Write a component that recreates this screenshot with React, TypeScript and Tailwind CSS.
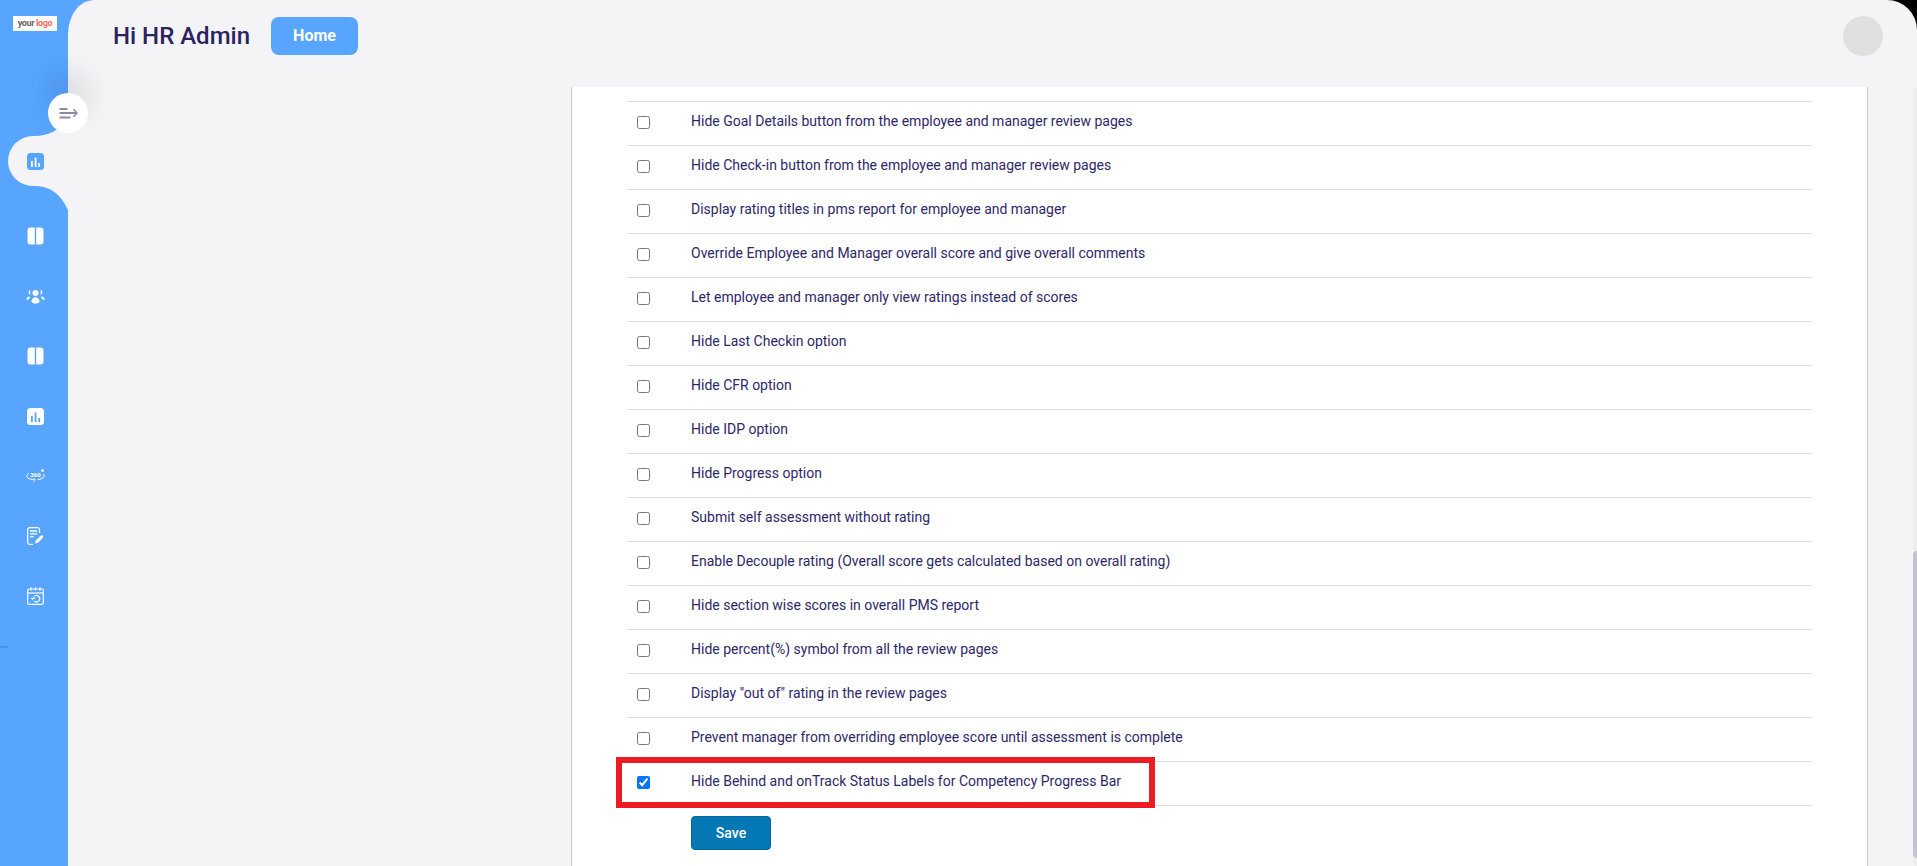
import React from 'react';

const rows = [
  'Hide Goal Details button from the employee and manager review pages',
  'Hide Check-in button from the employee and manager review pages',
  'Display rating titles in pms report for employee and manager',
  'Override Employee and Manager overall score and give overall comments',
  'Let employee and manager only view ratings instead of scores',
  'Hide Last Checkin option',
  'Hide CFR option',
  'Hide IDP option',
  'Hide Progress option',
  'Submit self assessment without rating',
  'Enable Decouple rating (Overall score gets calculated based on overall rating)',
  'Hide section wise scores in overall PMS report',
  'Hide percent(%) symbol from all the review pages',
  'Display "out of" rating in the review pages',
  'Prevent manager from overriding employee score until assessment is complete',
  'Hide Behind and onTrack Status Labels for Competency Progress Bar',
];

const ChartIcon: React.FC<{ bg: string; fg: string }> = ({ bg, fg }) => (
  <svg width="17" height="17" viewBox="0 0 17 17">
    <rect width="17" height="17" rx="3.5" fill={bg} />
    <rect x="4" y="8" width="1.8" height="6" fill={fg} />
    <rect x="7.7" y="4.5" width="1.8" height="9.5" fill={fg} />
    <rect x="11.3" y="10" width="1.8" height="4" fill={fg} />
  </svg>
);

const SplitIcon = () => (
  <svg width="17" height="18" viewBox="0 0 17 18">
    <path d="M3.5 0.5H7.8V17.5H3.5A3 3 0 0 1 0.5 14.5V3.5A3 3 0 0 1 3.5 0.5Z" fill="#fff" />
    <path d="M9.2 0.5H13.5A3 3 0 0 1 16.5 3.5V14.5A3 3 0 0 1 13.5 17.5H9.2Z" fill="#fff" />
  </svg>
);

const PeopleIcon = () => (
  <svg width="19" height="15" viewBox="0 0 19 15" fill="#fff">
    <circle cx="9.5" cy="4" r="3" />
    <path d="M5.5 12.5C5.5 10 7.2 8.3 9.5 8.3S13.5 10 13.5 12.5C13.5 14 11.5 14.5 9.5 14.5S5.5 14 5.5 12.5Z" />
    <path d="M4.6 0.9C3.2 1.2 2.3 2.3 2.6 3.7C2.8 4.7 3.5 5.4 4.6 5.6C4.1 4.2 4 2.4 4.6 0.9Z" />
    <path d="M14.4 0.9C15.8 1.2 16.7 2.3 16.4 3.7C16.2 4.7 15.5 5.4 14.4 5.6C14.9 4.2 15 2.4 14.4 0.9Z" />
    <path d="M0.2 10.2C0.6 8.6 1.8 7.8 3.6 7.6L4.2 8.4C3.4 9 3 9.6 2.8 10.6C1.8 10.8 0.8 10.7 0.2 10.2Z" />
    <path d="M18.8 10.2C18.4 8.6 17.2 7.8 15.4 7.6L14.8 8.4C15.6 9 16 9.6 16.2 10.6C17.2 10.8 18.2 10.7 18.8 10.2Z" />
  </svg>
);

const Icon360 = () => (
  <svg width="19" height="14" viewBox="0 0 19 14" fill="none" stroke="#fff">
    <circle cx="16.5" cy="1.6" r="1.4" fill="#fff" stroke="none" />
    <path d="M3 4.5C1.6 5.2 0.7 6 0.7 7C0.7 9 4.5 10.5 8 10.7" strokeWidth="1" />
    <path d="M11.5 10.6C15 10.2 18.2 9 18.2 7C18.2 6.3 17.7 5.7 17 5.2" strokeWidth="1" />
    <path d="M7.5 9.2L9.2 10.8L7.5 12.6" strokeWidth="1" />
    <text x="9.5" y="7.6" textAnchor="middle" fontSize="6" fontWeight="700" fill="#fff" stroke="none" fontFamily="Roboto, sans-serif">
      360
    </text>
  </svg>
);

const DocIcon = () => (
  <svg width="17" height="18" viewBox="0 0 17 18" fill="none" stroke="#fff">
    <path d="M12.5 6V2.5A1.8 1.8 0 0 0 10.7 0.7H2.5A1.8 1.8 0 0 0 0.7 2.5V15.5A1.8 1.8 0 0 0 2.5 17.3H6" strokeWidth="1.2" />
    <path d="M3 4H10M3 6.8H10M3 9.6H7" strokeWidth="1.3" />
    <path d="M8 16.5L8.7 13.5L13.5 8.7C14.2 8 15.2 8 15.8 8.6C16.4 9.2 16.4 10.2 15.7 10.9L10.9 15.8Z" fill="#fff" stroke="none" />
  </svg>
);

const CalendarIcon = () => (
  <svg width="17" height="18" viewBox="0 0 17 18" fill="none" stroke="#fff">
    <rect x="0.7" y="2" width="15.6" height="15.3" rx="1.5" strokeWidth="1.2" />
    <path d="M0.7 6H16.3" strokeWidth="1.2" />
    <path d="M4 0.3V3.5M8.5 0.3V3.5M13 0.3V3.5" strokeWidth="1.3" />
    <path d="M7.5 9.2A3.2 3.2 0 1 1 7.5 14.2" strokeWidth="1.2" />
    <path d="M4 11.5H7.8L6.2 9.8M6.2 13.2L4.6 11.5" strokeWidth="1" />
  </svg>
);

const Slot: React.FC<{ children: React.ReactNode }> = ({ children }) => (
  <div className="h-[60px] flex items-center justify-center">{children}</div>
);

export default function App() {
  return (
    <div
      className="relative flex h-[866px] w-[1917px] overflow-hidden bg-linear-to-r from-[#57a5ff] from-50% to-black to-50%"
      style={{ fontFamily: 'Roboto, sans-serif' }}
    >
      <aside className="relative w-[68px] shrink-0 bg-[#57a5ff]">
        <div className="ml-[13px] mt-[16px] flex h-[15px] w-[44px] items-center justify-center bg-white text-[9px] font-bold leading-none tracking-[-0.4px]">
          <span className="text-[#666666]">your</span>
          <span className="ml-[2px] text-[#ef6a5f]">logo</span>
        </div>

        <svg className="absolute left-0 top-[110px]" width="68" height="100" viewBox="0 0 68 100">
          <path
            d="M68 6C62 18 52 26 33 26A25 25 0 0 0 33 76C50 76 60 83 68 100Z"
            fill="#f4f4f7"
          />
        </svg>

        <div className="relative w-[70px] pt-[100px]">
          <Slot>
            <ChartIcon bg="#57a5ff" fg="#fff" />
          </Slot>
          <div className="h-[15px]" />
          <Slot>
            <SplitIcon />
          </Slot>
          <Slot>
            <PeopleIcon />
          </Slot>
          <Slot>
            <SplitIcon />
          </Slot>
          <Slot>
            <ChartIcon bg="#fff" fg="#57a5ff" />
          </Slot>
          <Slot>
            <Icon360 />
          </Slot>
          <Slot>
            <DocIcon />
          </Slot>
          <Slot>
            <CalendarIcon />
          </Slot>
        </div>
        <div className="absolute left-0 top-[646px] h-[2px] w-[8px] bg-[#3f93f5]" />
      </aside>

      <main className="flex min-w-0 flex-1 flex-col rounded-tl-[26px_34px] rounded-tr-[30px] bg-[#f4f4f7]">
        <header className="flex h-[87px] shrink-0 items-start pl-[45px] pr-[34px]">
          <h1 className="mt-[19px] text-2xl font-medium leading-[34px] text-[#2b2360]">Hi HR Admin</h1>
          <button className="ml-[21px] mt-[17px] h-[38px] w-[87px] rounded-lg bg-[#57a5ff] text-base font-bold text-white">
            Home
          </button>
          <div className="ml-auto mt-[16px] h-10 w-10 rounded-full bg-[#e0e0e0]" />
        </header>

        <div className="min-h-0 flex-1 pl-[503px] pr-[49px]">
          <section className="h-full border-x border-[#c8c8c8] bg-white pl-[55px] pr-[55px] pt-[14px]">
            <div className="border-t border-[#dedede]">
              {rows.map((text, i) => (
                <label key={text} className="flex h-[44px] items-center border-b border-[#dedede] pb-[6px] text-sm text-[#2e2767]">
                  <span className="flex w-[64px] pl-[10px] pt-[4px]">
                    <input
                      type="checkbox"
                      defaultChecked={i === rows.length - 1}
                      className="h-[13px] w-[13px]"
                    />
                  </span>
                  <span>{text}</span>
                </label>
              ))}
            </div>
            <button className="ml-[64px] mt-[10px] h-[34px] w-[80px] rounded-[4px] border border-[#04679f] bg-[#0477b5] text-sm font-medium text-white">
              Save
            </button>
          </section>
        </div>
      </main>

      <button className="absolute left-[48px] top-[93px] flex h-10 w-10 items-center justify-center rounded-full bg-white shadow-[0_-20px_30px_rgba(0,0,0,0.12)]">
        <svg width="19" height="11" viewBox="0 0 19 11" fill="none" stroke="#8f88a8" strokeWidth="2">
          <path d="M0.5 1H8.5M0.5 5H18M0.5 9.5H11.5" />
          <path d="M14.5 1.2L18 5L14.5 8.8" strokeWidth="1.6" />
        </svg>
      </button>

      <div className="absolute left-[616px] top-[757px] h-[51px] w-[539px] border-[6px] border-[#ed1c24]" />

      <div className="absolute right-0 top-[87px] bottom-0 w-[4px] rounded-l-sm bg-[#eeeeee]">
        <div className="absolute left-0 top-[464px] h-[307px] w-full rounded-l-sm bg-[#c4c2cf]" />
      </div>
    </div>
  );
}
